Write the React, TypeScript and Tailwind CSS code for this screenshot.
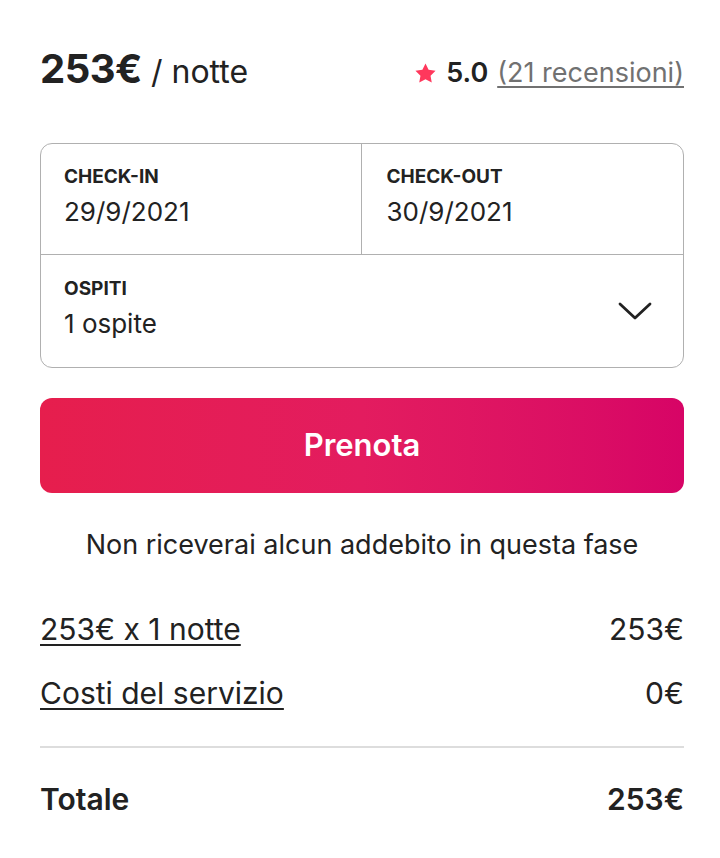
import React from "react";

export default function App() {
  return (
    <div
      className="w-[720px] h-[858px] bg-white pl-10 pr-[36px] pt-[46px] text-[#222222]"
      style={{ fontFamily: "Inter, 'Noto Sans', sans-serif" }}
    >
      <div className="flex items-center justify-between h-[48px]">
        <div className="flex items-baseline">
          <span className="text-[40px] leading-[48px] font-bold tracking-[-0.5px]">253€</span>
          <span className="text-[32px] leading-[48px] ml-[9px]">/ notte</span>
        </div>
        <div className="flex items-center text-[27px] leading-[36px] pt-[6px]">
          <svg width="23" height="23" viewBox="0 0 32 32" className="mr-[9px]">
            <path
              fill="#FF385C"
              d="M16 2l4.3 8.8 9.7 1.4-7 6.8 1.7 9.6L16 24l-8.7 4.6L9 19l-7-6.8 9.7-1.4z"
            />
          </svg>
          <span className="font-semibold">5.0</span>
          <span className="ml-[9px] text-[#717171] underline underline-offset-[4px] decoration-[1.5px]">
            (21 recensioni)
          </span>
        </div>
      </div>

      <div className="mt-[49px] border border-[#b0b0b0] rounded-[12px] h-[225px] flex flex-col">
        <div className="flex h-[111px] border-b border-[#b0b0b0]">
          <div className="flex-1 border-r border-[#b0b0b0] pl-[23px] pt-[22px]">
            <div className="text-[19px] font-bold leading-[22px]">CHECK-IN</div>
            <div className="text-[26px] leading-[32px] mt-[8px]">29/9/2021</div>
          </div>
          <div className="flex-1 pl-[25px] pt-[22px]">
            <div className="text-[19px] font-bold leading-[22px]">CHECK-OUT</div>
            <div className="text-[26px] leading-[32px] mt-[8px]">30/9/2021</div>
          </div>
        </div>
        <div className="flex-1 flex items-center justify-between pl-[23px] pr-[31px]">
          <div className="self-start pt-[23px]">
            <div className="text-[19px] font-bold leading-[22px]">OSPITI</div>
            <div className="text-[26px] leading-[32px] mt-[8px]">1 ospite</div>
          </div>
          <svg width="34" height="20" viewBox="0 0 34 20" fill="none">
            <path d="M2 3l15 14L32 3" stroke="#222" strokeWidth="2.8" strokeLinecap="round" strokeLinejoin="round" />
          </svg>
        </div>
      </div>

      <button className="mt-[30px] w-full h-[95px] rounded-[12px] bg-gradient-to-r from-[#E61E4D] via-[#E31C5F] to-[#D70466] text-white text-[31px] font-semibold">
        Prenota
      </button>

      <div className="text-center text-[27px] mt-[34px] leading-[36px]">
        Non riceverai alcun addebito in questa fase
      </div>

      <div className="mt-[46px] flex justify-between text-[30px] leading-[40px]">
        <span className="underline underline-offset-[4px] decoration-[1.5px]">253€ x 1 notte</span>
        <span>253€</span>
      </div>
      <div className="mt-[24px] flex justify-between text-[30px] leading-[40px]">
        <span className="underline underline-offset-[4px] decoration-[1.5px]">Costi del servizio</span>
        <span>0€</span>
      </div>
      <div className="mt-[33px] border-t-2 border-[#dddddd]"></div>
      <div className="mt-[31px] flex justify-between text-[30px] leading-[40px] font-semibold">
        <span>Totale</span>
        <span>253€</span>
      </div>
    </div>
  );
}
